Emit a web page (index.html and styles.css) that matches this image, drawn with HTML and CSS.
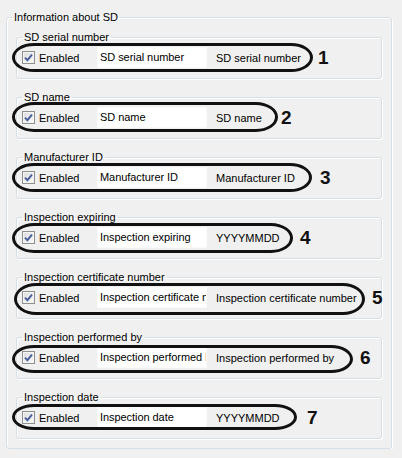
FILE: index.html
```html
<!DOCTYPE html>
<html lang="en">
<head>
    <meta charset="UTF-8">
    <meta name="viewport" content="width=device-width, initial-scale=1.0">
    <title>Information about SD</title>
    <link rel="stylesheet" href="styles.css">
</head>
<body>

    <fieldset class="group">
        <legend>Information about SD</legend>

        <fieldset class="item">
            <legend>SD serial number</legend>
            <div class="row">
                <label class="check"><span class="box"><svg viewBox="0 0 11 11"><path d="M2 5.6 L4.4 8.2 L9 2.6"/></svg></span>Enabled</label>
                <span class="field">SD serial number</span>
                <span class="hint">SD serial number</span>
                <span class="loop mark-1"></span>
                <span class="num num-1">1</span>
            </div>
        </fieldset>

        <fieldset class="item">
            <legend>SD name</legend>
            <div class="row">
                <label class="check"><span class="box"><svg viewBox="0 0 11 11"><path d="M2 5.6 L4.4 8.2 L9 2.6"/></svg></span>Enabled</label>
                <span class="field">SD name</span>
                <span class="hint">SD name</span>
                <span class="loop mark-2"></span>
                <span class="num num-2">2</span>
            </div>
        </fieldset>

        <fieldset class="item">
            <legend>Manufacturer ID</legend>
            <div class="row">
                <label class="check"><span class="box"><svg viewBox="0 0 11 11"><path d="M2 5.6 L4.4 8.2 L9 2.6"/></svg></span>Enabled</label>
                <span class="field">Manufacturer ID</span>
                <span class="hint">Manufacturer ID</span>
                <span class="loop mark-3"></span>
                <span class="num num-3">3</span>
            </div>
        </fieldset>

        <fieldset class="item">
            <legend>Inspection expiring</legend>
            <div class="row">
                <label class="check"><span class="box"><svg viewBox="0 0 11 11"><path d="M2 5.6 L4.4 8.2 L9 2.6"/></svg></span>Enabled</label>
                <span class="field">Inspection expiring</span>
                <span class="hint">YYYYMMDD</span>
                <span class="loop mark-4"></span>
                <span class="num num-4">4</span>
            </div>
        </fieldset>

        <fieldset class="item">
            <legend>Inspection certificate number</legend>
            <div class="row">
                <label class="check"><span class="box"><svg viewBox="0 0 11 11"><path d="M2 5.6 L4.4 8.2 L9 2.6"/></svg></span>Enabled</label>
                <span class="field">Inspection certificate number</span>
                <span class="hint">Inspection certificate number</span>
                <span class="loop mark-5"></span>
                <span class="num num-5">5</span>
            </div>
        </fieldset>

        <fieldset class="item">
            <legend>Inspection performed by</legend>
            <div class="row">
                <label class="check"><span class="box"><svg viewBox="0 0 11 11"><path d="M2 5.6 L4.4 8.2 L9 2.6"/></svg></span>Enabled</label>
                <span class="field">Inspection performed by</span>
                <span class="hint">Inspection performed by</span>
                <span class="loop mark-6"></span>
                <span class="num num-6">6</span>
            </div>
        </fieldset>

        <fieldset class="item">
            <legend>Inspection date</legend>
            <div class="row">
                <label class="check"><span class="box"><svg viewBox="0 0 11 11"><path d="M2 5.6 L4.4 8.2 L9 2.6"/></svg></span>Enabled</label>
                <span class="field">Inspection date</span>
                <span class="hint">YYYYMMDD</span>
                <span class="loop mark-7"></span>
                <span class="num num-7">7</span>
            </div>
        </fieldset>
    </fieldset>

</body>
</html>
```

FILE: styles.css
```css
body {
    margin: 0;
    background-color: #f0f0f0;
    font-family: "Liberation Sans", Arial, sans-serif;
    font-size: 11px;
    color: #000;
}

fieldset {
    min-width: 0;
    border: 1px solid #d5dfe5;
    border-radius: 3px;
    box-shadow: inset 1px 1px 0 #fff, 1px 1px 0 #fff;
}

legend {
    padding: 0 2px;
    line-height: 14px;
}

.group {
    box-sizing: border-box;
    width: 386px;
    margin: 10px 0 0 6px;
    padding: 6px 5px 9px 5px;
}

.item {
    margin: 11px 4px 0 4px;
    padding: 3px 5px 10px 5px;
}

.item:first-of-type {
    margin-top: 0;
}

.row {
    position: relative;
    display: flex;
    align-items: center;
    height: 21px;
}

.check {
    display: flex;
    align-items: center;
    width: 75px;
}

.box {
    box-sizing: border-box;
    width: 13px;
    height: 13px;
    margin-right: 4px;
    border: 1px solid #8e8f8f;
    background: linear-gradient(135deg, #dcdcdc, #fbfbfb);
    box-shadow: inset 0 0 0 1px #f4f4f4;
}

.box svg {
    display: block;
    width: 11px;
    height: 11px;
}

.box path {
    fill: none;
    stroke: #4a5e9c;
    stroke-width: 1.9;
}

.field {
    box-sizing: border-box;
    width: 110px;
    height: 21px;
    padding: 0 2px;
    border: 1px solid #fafafa;
    background-color: #fff;
    line-height: 19px;
    letter-spacing: -0.06px;
    white-space: nowrap;
    overflow: hidden;
}

.hint {
    margin-left: 9px;
    white-space: nowrap;
}

/* hand-drawn callouts over the rows */
.loop {
    position: absolute;
    left: -10px;
    box-sizing: border-box;
    border: 3px solid #111;
    border-radius: 22px / 50%;
}

.num {
    position: absolute;
    top: 1px;
    font-size: 19px;
    line-height: 19px;
    font-weight: bold;
    color: #111;
}

.mark-1 { top: -4px; width: 301px; height: 29px; }
.mark-2 { top: -5px; width: 266px; height: 30px; }
.mark-3 { top: -4px; width: 300px; height: 29px; }
.mark-4 { top: -4px; width: 281px; height: 30px; }
.mark-5 { top: -4px; left: -8px; width: 351px; height: 32px; }
.mark-6 { top: -2px; width: 341px; height: 28px; }
.mark-7 { top: -3px; width: 285px; height: 26px; }

.num-1 { left: 296px; }
.num-2 { left: 259px; }
.num-3 { left: 298px; }
.num-4 { left: 278px; }
.num-5 { left: 350px; }
.num-6 { left: 338px; }
.num-7 { left: 285px; }
```
